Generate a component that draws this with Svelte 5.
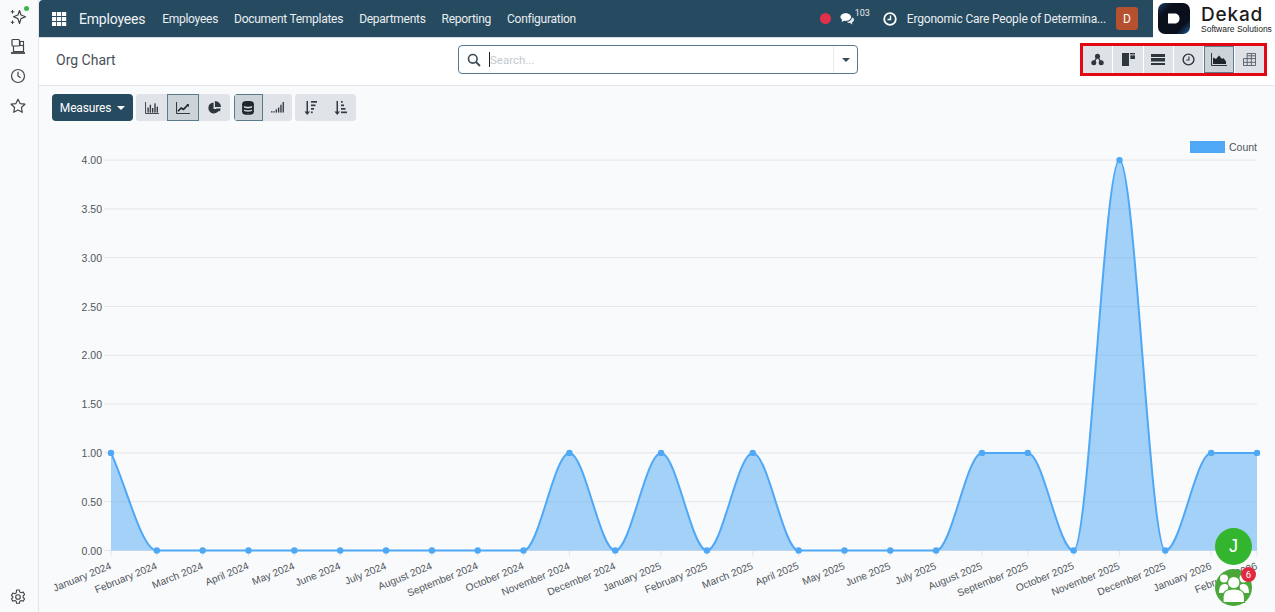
<script>
  const menu = ["Employees", "Document Templates", "Departments", "Reporting", "Configuration"];
  const months = [
    "January 2024", "February 2024", "March 2024", "April 2024", "May 2024", "June 2024", "July 2024",
    "August 2024", "September 2024", "October 2024", "November 2024", "December 2024", "January 2025",
    "February 2025", "March 2025", "April 2025", "May 2025", "June 2025", "July 2025", "August 2025",
    "September 2025", "October 2025", "November 2025", "December 2025", "January 2026", "February 2026",
  ];
  const counts = [1, 0, 0, 0, 0, 0, 0, 0, 0, 0, 1, 0, 1, 0, 1, 0, 0, 0, 0, 1, 1, 0, 4, 0, 1, 1];
  const ticks = ["0.00", "0.50", "1.00", "1.50", "2.00", "2.50", "3.00", "3.50", "4.00"];

  // chart geometry, svg origin is the top left of the chart area
  const x0 = 72;
  const stepX = 45.84;
  const baseY = 428.5;
  const unitY = 97.6;
  const pts = counts.map((v, i) => ({ x: x0 + i * stepX, y: baseY - v * unitY }));

  // monotone cubic, same idea as chart.js
  function monotone(p) {
    const d = [];
    for (let i = 0; i < p.length - 1; i++) d.push((p[i + 1].y - p[i].y) / (p[i + 1].x - p[i].x));
    const m = p.map((_, i) => {
      if (i === 0) return d[0];
      if (i === p.length - 1) return d[i - 1];
      if (d[i - 1] * d[i] <= 0) return 0;
      return (d[i - 1] + d[i]) / 2;
    });
    let path = `M${p[0].x} ${p[0].y}`;
    for (let i = 0; i < p.length - 1; i++) {
      const dx = (p[i + 1].x - p[i].x) / 3;
      path += ` C${p[i].x + dx} ${p[i].y + m[i] * dx} ${p[i + 1].x - dx} ${p[i + 1].y - m[i + 1] * dx} ${p[i + 1].x} ${p[i + 1].y}`;
    }
    return path;
  }
  const line = monotone(pts);
  const area = `${line} L${pts[pts.length - 1].x} ${baseY} L${x0} ${baseY} Z`;
</script>

<div class="shell">
  <aside class="rail">
    <div class="rail-top">
      <span class="online"></span>
      <svg viewBox="0 0 18 18" class="rail-icon">
        <path d="M10.500 2.500l1.500 4.500 4.500 1.800-4.500 1.800-1.500 4.900-1.600-4.900-4.400-1.800 4.400-1.800z" fill="none" stroke="#444" stroke-width="1.200" stroke-linejoin="round" />
        <path d="M3.500 2v3.600M1.700 3.800h3.600M3.500 12.500v3.600M1.700 14.300h3.600" stroke="#444" stroke-width="1" />
      </svg>
      <svg viewBox="0 0 18 18" class="rail-icon">
        <rect x="3" y="1.500" width="7.500" height="6.500" rx="1" fill="none" stroke="#444" stroke-width="1.200" />
        <rect x="11" y="3.500" width="3.500" height="4" fill="none" stroke="#444" stroke-width="1.100" />
        <path d="M4.500 8v5.500h10V8" fill="none" stroke="#444" stroke-width="1.200" />
        <path d="M2 15h14" stroke="#444" stroke-width="1.800" />
      </svg>
      <svg viewBox="0 0 18 18" class="rail-icon">
        <circle cx="9" cy="9" r="6.500" fill="none" stroke="#444" stroke-width="1.200" />
        <path d="M9 4.800V9l2.600 1.800" fill="none" stroke="#444" stroke-width="1.200" />
      </svg>
      <svg viewBox="0 0 18 18" class="rail-icon">
        <path d="M9 2.200l2.100 4.400 4.800.6-3.500 3.300.9 4.800L9 13l-4.300 2.300.9-4.800-3.500-3.300 4.800-.6z" fill="none" stroke="#444" stroke-width="1.200" stroke-linejoin="round" />
      </svg>
    </div>
    <svg viewBox="0 0 18 18" class="rail-icon">
      <path d="M7.600 2h2.800l.4 2 1.500.8 1.900-.7 1.400 2.400-1.500 1.300v1.700l1.500 1.300-1.400 2.400-1.900-.7-1.500.8-.4 2H7.600l-.4-2-1.500-.8-1.900.7-1.400-2.400 1.500-1.300V8.800L2.400 7.500l1.400-2.400 1.900.7 1.500-.8z" fill="none" stroke="#444" stroke-width="1.100" stroke-linejoin="round" />
      <circle cx="9" cy="9" r="2.300" fill="none" stroke="#444" stroke-width="1.100" />
    </svg>
  </aside>

  <main class="content">
    <header class="topbar">
      <nav class="navbar">
        <svg viewBox="0 0 15 14" class="apps">
          {#each [0, 5, 10] as cx}
            {#each [0, 5, 10] as cy}
              <rect x={cx} y={cy} width="4.200" height="4" fill="#fff" />
            {/each}
          {/each}
        </svg>
        <span class="brand">Employees</span>
        <ul class="menu">
          {#each menu as item}
            <li>{item}</li>
          {/each}
        </ul>
        <div class="systray">
          <span class="rec"></span>
          <span class="chat">
            <svg viewBox="0 0 17 14" width="15" height="13">
              <path d="M6.500 1C3 1 .5 2.900.5 5.300c0 1.300.8 2.400 2 3.200L1.700 11l2.900-1.500c.6.1 1.200.2 1.900.2 3.400 0 6-2 6-4.400S9.900 1 6.500 1z" fill="#fff" />
              <path d="M13.500 5.500c.1 2.700-2.600 5-6 5.200 1 1 2.300 1.500 3.800 1.500l2.800 1.500-.5-2.300c1.400-.6 2.400-1.800 2.400-3 0-1.200-1-2.300-2.500-2.900z" fill="#dfe6ea" />
            </svg>
            <sup>103</sup>
          </span>
          <svg viewBox="0 0 14 14" width="14" height="14" class="clock">
            <circle cx="7" cy="7" r="5.800" fill="none" stroke="#fff" stroke-width="1.800" />
            <path d="M7.500 3.500v4H4.500" fill="none" stroke="#fff" stroke-width="1.400" />
          </svg>
          <span class="company">Ergonomic Care People of Determina...</span>
          <span class="avatar">D</span>
        </div>
      </nav>
      <div class="logo">
        <svg viewBox="0 0 32 31" width="32" height="31">
          <defs>
            <linearGradient id="logoFill" x1="0" y1="0" x2="1" y2="1">
              <stop offset="0" stop-color="#1b3f63" />
              <stop offset="0.25" stop-color="#0a0f1c" />
              <stop offset="0.75" stop-color="#0a0f1c" />
              <stop offset="1" stop-color="#1f5f96" />
            </linearGradient>
          </defs>
          <rect width="32" height="31" rx="7" fill="url(#logoFill)" />
          <path d="M10 10.500h6.500c3 0 5 2 5 5s-2 5-5 5H10z" fill="#fff" />
        </svg>
        <div class="logo-text">
          <span class="logo-name">Dekad</span>
          <span class="logo-sub">Software Solutions</span>
        </div>
      </div>
    </header>

    <section class="panel">
      <h1 class="title">Org Chart</h1>
      <div class="search">
        <svg viewBox="0 0 14 14" width="14" height="14">
          <circle cx="5.800" cy="5.800" r="4.300" fill="none" stroke="#3a4a55" stroke-width="1.600" />
          <path d="M9 9l4 4" stroke="#3a4a55" stroke-width="1.800" />
        </svg>
        <span class="cursor"></span>
        <span class="placeholder">Search...</span>
        <span class="search-caret"><i class="caret dark"></i></span>
      </div>
      <div class="views">
        <button aria-label="Hierarchy">
          <svg viewBox="0 0 14 14" width="13" height="13" fill="#2f363c">
            <circle cx="7" cy="3.500" r="2.700" /><circle cx="3" cy="10.500" r="2.700" /><circle cx="11" cy="10.500" r="2.700" />
            <path d="M7 3.500L3 10.500M7 3.500l4 7" stroke="#2f363c" stroke-width="1.600" />
          </svg>
        </button>
        <button aria-label="Kanban">
          <svg viewBox="0 0 14 14" width="13" height="13" fill="#2f363c">
            <rect x="0" y="0" width="7.500" height="14" /><rect x="8.500" y="0" width="5.500" height="1.500" /><rect x="9" y="2.500" width="5" height="4" />
          </svg>
        </button>
        <button aria-label="List">
          <svg viewBox="0 0 14 12" width="14" height="12" fill="#2f363c">
            <rect width="14" height="3" y="0" /><rect width="14" height="3.500" y="4" /><rect width="14" height="2" y="9" />
          </svg>
        </button>
        <button aria-label="Activity">
          <svg viewBox="0 0 14 14" width="13" height="13">
            <circle cx="7" cy="7" r="5.800" fill="none" stroke="#2f363c" stroke-width="1.500" />
            <path d="M7.500 3.800V7.500H4.500" fill="none" stroke="#2f363c" stroke-width="1.200" />
          </svg>
        </button>
        <button class="on" aria-label="Graph">
          <svg viewBox="0 0 16 13" width="16" height="13">
            <path d="M.5 0v12.500H16" fill="none" stroke="#2f363c" stroke-width="1" />
            <path d="M2 11V4.500l3 1.500L8 2.500 11 6l1.500-1L15 8.500V11z" fill="#1f262b" />
          </svg>
        </button>
        <button aria-label="Pivot">
          <svg viewBox="0 0 14 14" width="13" height="13" fill="none" stroke="#555e65" stroke-width="1">
            <path d="M4.500.5h9v13H.5V6h13M.5 10h13M4.500 0v14M9 .5V14M4.500 3h9" />
          </svg>
        </button>
      </div>
    </section>

    <div class="toolbar">
      <button class="measures">Measures <i class="caret"></i></button>
      <div class="group">
        <button aria-label="Bar chart">
          <svg viewBox="0 0 15 13" width="14" height="12" fill="#333b41">
            <path d="M.5 0v12.500H15" fill="none" stroke="#333b41" />
            <rect x="2.500" y="6" width="1.500" height="5.500" /><rect x="5" y="3" width="1.500" height="8.500" /><rect x="7.500" y="6.500" width="1.500" height="5" /><rect x="10" y="1.500" width="1.500" height="10" /><rect x="12.500" y="5" width="1.500" height="6.500" />
          </svg>
        </button>
        <button class="on" aria-label="Line chart">
          <svg viewBox="0 0 15 13" width="14" height="12" fill="none" stroke="#1f262b">
            <path d="M.5 0v12.500H15" />
            <path d="M2 10l3.500-3.500L8 8l5-5" stroke-width="1.800" />
            <path d="M11 2.500h3v3z" fill="#1f262b" stroke="none" />
          </svg>
        </button>
        <button aria-label="Pie chart">
          <svg viewBox="0 0 14 14" width="13" height="13" fill="#2f363c">
            <path d="M6 1.500a6 6 0 1 0 6.300 7H6z" /><path d="M7.500 0v6.500h6.500A6.500 6.500 0 0 0 7.500 0z" /><path d="M8.500 8h5c0 1.200-.4 2.400-1.100 3.300z" />
          </svg>
        </button>
      </div>
      <div class="group two">
        <button class="on" aria-label="Stacked">
          <svg viewBox="0 0 12 14" width="12" height="14" fill="none" stroke="#1f262b" stroke-width="1.700">
            <ellipse cx="6" cy="2.800" rx="5" ry="2" fill="#1f262b" />
            <path d="M1 6.300c0 1.200 2.200 2 5 2s5-.8 5-2M1 9.500c0 1.200 2.200 2 5 2s5-.8 5-2" />
            <path d="M1 3v8c0 1.200 2.200 2 5 2s5-.8 5-2V3" />
          </svg>
        </button>
        <button aria-label="Cumulative">
          <svg viewBox="0 0 14 12" width="13" height="11" fill="#333b41">
            <rect x="0" y="10" width="1.500" height="1.500" /><rect x="2.500" y="10" width="1.500" height="1.500" /><rect x="5" y="8" width="1.500" height="3.500" /><rect x="7.500" y="6" width="1.500" height="5.500" /><rect x="10" y="3" width="1.500" height="8.500" /><rect x="12.500" y="0" width="1.500" height="11.500" />
          </svg>
        </button>
      </div>
      <div class="group">
        <button aria-label="Descending">
          <svg viewBox="0 0 13 14" width="13" height="14" fill="#333b41">
            <path d="M2.500 0h1.500v10.500H6L3.200 14 .5 10.500h2z" /><rect x="7" y="0" width="6" height="1.700" /><rect x="7" y="3.500" width="4.500" height="1.700" /><rect x="7" y="7" width="3" height="1.700" /><rect x="7" y="10.500" width="1.700" height="1.700" />
          </svg>
        </button>
        <button aria-label="Ascending">
          <svg viewBox="0 0 13 14" width="13" height="14" fill="#333b41">
            <path d="M2.500 0h1.500v10.500H6L3.200 14 .5 10.500h2z" /><rect x="7" y="0" width="1.700" height="1.700" /><rect x="7" y="3.500" width="3" height="1.700" /><rect x="7" y="7" width="4.500" height="1.700" /><rect x="7" y="10.500" width="6" height="1.700" />
          </svg>
        </button>
      </div>
    </div>

    <svg class="chart" viewBox="0 0 1236 490" width="1236" height="490">
      {#each ticks as t, i}
        <line x1="65" x2="1218" y1={baseY - (i * unitY) / 2} y2={baseY - (i * unitY) / 2} class="grid" />
        <text x="63" y={baseY - (i * unitY) / 2 + 4} text-anchor="end" class="tick">{t}</text>
      {/each}
      {#each pts as p}
        <line x1={p.x} x2={p.x} y1={baseY} y2={baseY + 6} class="grid" />
      {/each}
      <path d={area} fill="#4fa8f5" fill-opacity="0.5" />
      <path d={line} fill="none" stroke="#4fa8f5" stroke-width="2" />
      {#each pts as p}
        <circle cx={p.x} cy={p.y} r="3.200" fill="#4fa8f5" />
      {/each}
      {#each months as m, i}
        <text class="tick month" text-anchor="end" transform="translate({pts[i].x + 1} {baseY + 18}) rotate(-22)">{m}</text>
      {/each}
      <rect x="1151" y="19" width="35" height="12" fill="#4fa8f5" />
      <text x="1190" y="29" class="tick">Count</text>
    </svg>
  </main>

  <div class="fab user">J</div>
  <div class="fab team">
    <svg viewBox="0 0 30 30" width="30" height="30" fill="#fff">
      <circle cx="5" cy="5.500" r="4" /><circle cx="24.500" cy="5.500" r="4" />
      <path d="M0 20c0-6 2-9 5.500-9 1.500 0 3 .5 4 1.500L8 20zM30 20c0-6-2-9-5.500-9-1.500 0-3 .5-4 1.500L22 20z" />
      <circle cx="14.800" cy="9.500" r="6.200" stroke="#4aa83a" stroke-width="1.200" />
      <path d="M4 29.500v-6c0-5 4-7.500 10.800-7.500s10.700 2.500 10.700 7.500v6z" stroke="#4aa83a" stroke-width="1.200" />
    </svg>
    <span class="badge">6</span>
  </div>
</div>

<style>
  :global(body) {
    margin: 0;
    background: #f9fafb;
    overflow: hidden;
  }
  button {
    border: 0;
    padding: 0;
    font: inherit;
    cursor: pointer;
  }
  .shell {
    display: flex;
    height: 612px;
    overflow: hidden;
    position: relative;
    font-family: Roboto, "Open Sans", sans-serif;
    font-size: 12px;
    color: #374151;
    background: #f9fafb;
  }
  .rail {
    width: 36px;
    flex: none;
    border-right: 1px solid #e3e6ea;
    display: flex;
    flex-direction: column;
    align-items: center;
    justify-content: space-between;
    padding: 8px 2px 6px 0;
    box-sizing: content-box;
    height: 598px;
  }
  .rail-top {
    display: flex;
    flex-direction: column;
    align-items: center;
    gap: 11.500px;
    position: relative;
  }
  .rail-icon {
    width: 18px;
    height: 18px;
    display: block;
  }
  .online {
    position: absolute;
    top: -2.500px;
    right: -2px;
    width: 5px;
    height: 5px;
    border-radius: 50%;
    background: #3cb64a;
  }
  .content {
    flex: 1;
    min-width: 0;
    display: flex;
    flex-direction: column;
  }
  .topbar {
    display: flex;
    height: 38px;
    background: #fff;
    flex: none;
  }
  .navbar {
    flex: 1;
    display: flex;
    align-items: center;
    background: #264a5f;
    color: #fff;
    padding-left: 13px;
    border-bottom: 1px solid #d5dde2;
    border-top-left-radius: 4px;
  }
  .apps {
    width: 15px;
    height: 14px;
    margin-right: 12px;
  }
  .brand {
    font-size: 14px;
    letter-spacing: -0.200px;
    margin-right: 17px;
    color: #f1f4f6;
  }
  .menu {
    display: flex;
    list-style: none;
    margin: 0;
    padding: 0;
    gap: 16px;
    color: #e9eef1;
    letter-spacing: -0.270px;
  }
  .systray {
    margin-left: auto;
    display: flex;
    align-items: center;
    padding-right: 15px;
  }
  .rec {
    width: 11px;
    height: 11px;
    border-radius: 50%;
    background: #e0304a;
    margin-right: 9px;
  }
  .chat {
    display: flex;
    align-items: flex-start;
    margin-right: 13px;
  }
  .chat sup {
    font-size: 9px;
    line-height: 1;
    margin-top: -3px;
    color: #e9eef1;
  }
  .clock {
    margin-right: 10px;
  }
  .company {
    color: #e9eef1;
    margin-right: 10px;
    white-space: nowrap;
    letter-spacing: -0.200px;
  }
  .avatar {
    width: 22px;
    height: 23px;
    border-radius: 3px;
    background: #b5512f;
    display: flex;
    align-items: center;
    justify-content: center;
    font-size: 12px;
  }
  .logo {
    width: 122px;
    flex: none;
    display: flex;
    align-items: flex-start;
    padding: 3px 0 0 5px;
    box-sizing: border-box;
    gap: 11px;
    background: #fff;
  }
  .logo-text {
    display: flex;
    flex-direction: column;
    padding-top: 2px;
    color: #1c1c1c;
  }
  .logo-name {
    font-family: "Inter", sans-serif;
    font-size: 19px;
    line-height: 19px;
    font-weight: 500;
    letter-spacing: 0.800px;
  }
  .logo-sub {
    font-family: "Liberation Sans", sans-serif;
    font-size: 8.500px;
    line-height: 10px;
    white-space: nowrap;
  }
  .panel {
    height: 48px;
    flex: none;
    display: flex;
    align-items: center;
    background: #fff;
    border-bottom: 1px solid #e3e6ea;
    box-sizing: border-box;
    padding: 0 11px 4px 17px;
  }
  .title {
    font-size: 14px;
    font-weight: 400;
    margin: 0;
    width: 402px;
    flex: none;
    color: #495057;
  }
  .search {
    width: 400px;
    height: 29px;
    border: 1px solid #56788a;
    border-radius: 4px;
    box-sizing: border-box;
    display: flex;
    align-items: center;
    padding-left: 8px;
    flex: none;
  }
  .cursor {
    width: 1px;
    height: 15px;
    background: #222;
    margin-left: 8px;
  }
  .placeholder {
    color: #c3c9cf;
    font-size: 11.500px;
  }
  .search-caret {
    margin-left: auto;
    width: 23px;
    height: 100%;
    border-left: 1px solid #e9ecef;
    display: flex;
    align-items: center;
    justify-content: center;
  }
  .caret {
    display: inline-block;
    width: 0;
    height: 0;
    border: 4px solid transparent;
    border-top-color: #fff;
    border-bottom: 0;
    margin-left: 3px;
    vertical-align: middle;
  }
  .caret.dark {
    border-top-color: #3a4a55;
    margin: 0;
  }
  .views {
    margin-left: auto;
    display: flex;
    gap: 1px;
    background: #fff;
    outline: 3px solid #e30613;
    height: 27px;
  }
  .views button {
    width: 29.330px;
    background: #dee2e6;
    display: flex;
    align-items: center;
    justify-content: center;
  }
  .views button.on,
  .group button.on {
    background: #ccd4da;
    box-shadow: inset 0 0 0 1px #5c7a8a;
  }
  .toolbar {
    display: flex;
    align-items: stretch;
    height: 27px;
    margin: 8px 0 1px 13px;
    flex: none;
    gap: 3px;
  }
  .measures {
    background: #264a5f;
    color: #fff;
    width: 81px;
    border-radius: 4px;
    letter-spacing: -0.150px;
  }
  .group {
    display: flex;
    border-radius: 4px;
    overflow: hidden;
    background: #e0e3e8;
  }
  .group button {
    width: 30.500px;
    background: #e0e3e8;
    display: flex;
    align-items: center;
    justify-content: center;
  }
  .group:nth-child(2) button {
    width: 31.330px;
  }
  .group.two {
    margin-left: 1px;
  }
  .group.two button {
    width: 29px;
  }
  .chart {
    display: block;
    flex: none;
  }
  .grid {
    stroke: #e4e6e9;
    stroke-width: 1;
  }
  .tick {
    font-family: "Liberation Sans", sans-serif;
    font-size: 10.500px;
    fill: #50565c;
  }
  .month {
    font-size: 10.200px;
  }
  .fab {
    position: absolute;
    width: 37px;
    height: 37px;
    border-radius: 50%;
    display: flex;
    align-items: center;
    justify-content: center;
    color: #fff;
    right: 23px;
  }
  .user {
    top: 528px;
    background: #34b52f;
    font-size: 18px;
    font-family: "Liberation Sans", sans-serif;
  }
  .team {
    top: 569px;
    background: #4aa83a;
  }
  .badge {
    position: absolute;
    top: -2.500px;
    right: -4px;
    width: 15px;
    height: 15px;
    border-radius: 50%;
    background: #e0283f;
    color: #fff;
    font-size: 9.500px;
    display: flex;
    align-items: center;
    justify-content: center;
  }
</style>
